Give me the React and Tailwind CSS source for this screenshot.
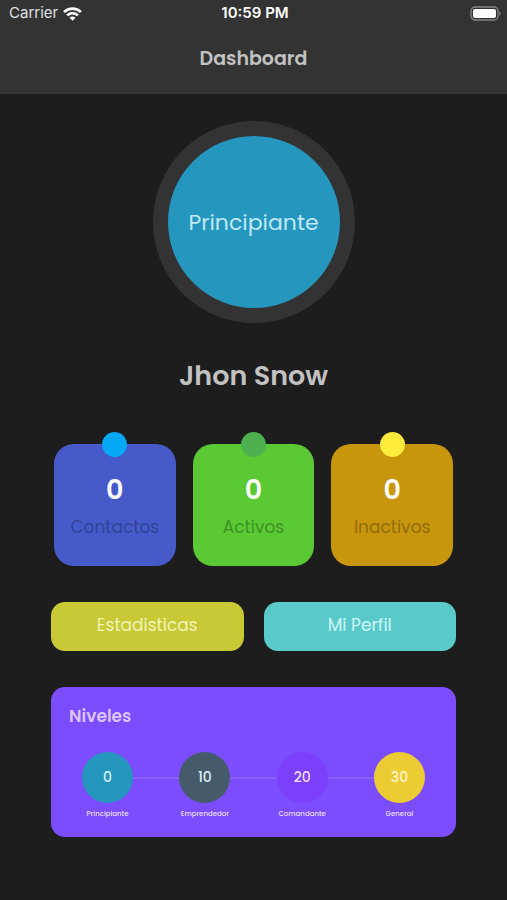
import React from "react";

const stats = [
  {
    label: "Contactos",
    value: 0,
    card: "bg-[#465bc9]",
    dot: "bg-[#03a9f4]",
    text: "text-[#33439a]",
  },
  {
    label: "Activos",
    value: 0,
    card: "bg-[#5ac933]",
    dot: "bg-[#4caf50]",
    text: "text-[#3f9324]",
  },
  {
    label: "Inactivos",
    value: 0,
    card: "bg-[#c8960c]",
    dot: "bg-[#ffeb3b]",
    text: "text-[#926c0a]",
  },
];

const levels = [
  { name: "Principiante", points: 0, color: "bg-[#2596be]", text: "text-[#d5f1fb]" },
  { name: "Emprendedor", points: 10, color: "bg-[#455a6b]", text: "text-[#dbeef5]" },
  { name: "Comandante", points: 20, color: "bg-[#7c3ffb]", text: "text-[#eeddff]" },
  { name: "General", points: 30, color: "bg-[#edcb33]", text: "text-[#fdf6c9]" },
];

const StatusBar = () => {
  return (
    <div className="grid grid-cols-3 items-center h-[27px] pl-[9px] pr-[6px] font-['Inter',sans-serif]">
      <div className="flex items-center gap-[5px] text-[15px] text-[#e0e0e0]">
        Carrier
        <svg width="19" height="14" viewBox="0 0 19 14" fill="none" stroke="#fff" strokeWidth="2.7">
          <path d="M1 5C5.7 0.4 13.3 0.4 18 5" />
          <path d="M4.1 8.4C7.2 5.4 11.8 5.4 14.9 8.4" />
          <path d="M6.5 10.8C8.2 9.2 10.8 9.2 12.5 10.8L9.5 13.8Z" fill="#fff" stroke="none" />
        </svg>
      </div>
      <div className="text-center text-[15px] font-semibold text-white">
        10:59 PM
      </div>
      <svg className="justify-self-end" width="31" height="15" viewBox="0 0 31 15">
        <rect x="1" y="1" width="27" height="13" rx="4" fill="none" stroke="#858585" strokeWidth="1.3" />
        <rect x="3" y="3" width="23" height="9" rx="2" fill="#fff" />
        <path d="M29.3 5.2C31 6 31 9 29.3 9.8Z" fill="#858585" />
      </svg>
    </div>
  );
};

const App = () => {
  return (
    <div className="flex flex-col min-h-screen bg-[#1d1d1e] font-['Poppins','Inter',sans-serif]">
      <header className="bg-[#333333] pb-5">
        <StatusBar />
        <h1 className="pt-[17px] text-center text-[19px] leading-[30px] font-semibold text-[#c2c2c2]">
          Dashboard
        </h1>
      </header>
      <main className="flex flex-col px-[51px] pt-[27px] pb-12">
        <div className="flex items-center justify-center self-center size-[202px] rounded-full border-[15px] border-[#333333] bg-[#2596be] text-[22px] text-[#bfe9f8]">
          Principiante
        </div>
        <h2 className="mt-[33px] text-center text-[27px] leading-[40px] font-semibold text-[#c2c2c2]">
          Jhon Snow
        </h2>

        <div className="grid grid-cols-3 gap-[17px] mt-12 px-[3px]">
          {stats.map((stat) => (
            <div
              key={stat.label}
              className={`relative flex flex-col items-center aspect-square rounded-[20px] pt-[26px] ${stat.card}`}
            >
              <span className={`absolute -top-3 size-[25px] rounded-full ${stat.dot}`} />
              <span className="text-[27px] leading-[40px] font-semibold text-white">
                {stat.value}
              </span>
              <span className={`mt-[3px] text-[17px] leading-[28px] ${stat.text}`}>
                {stat.label}
              </span>
            </div>
          ))}
        </div>

        <div className="grid grid-cols-2 gap-5 mt-9">
          <button className="h-[49px] rounded-[14px] bg-[#c8c935] text-[17px] text-[#f2f3b8]">
            Estadisticas
          </button>
          <button className="h-[49px] rounded-[14px] bg-[#5ac9c9] text-[17px] text-[#cdf7f6]">
            Mi Perfil
          </button>
        </div>

        <section className="mt-9 rounded-[14px] bg-[#7c4dff] px-[18px] pt-[15px] pb-4">
          <h3 className="text-[17px] leading-[28px] font-semibold text-[#dcc5ff]">
            Niveles
          </h3>
          <div className="flex mt-[22px] px-[13px]">
            {levels.map((level, i) => (
              <React.Fragment key={level.name}>
                {i > 0 && <div className="flex-1 h-[2px] mt-[25px] bg-[#8960ff]" />}
                <div className="flex flex-col items-center w-[51px]">
                  <div
                    className={`flex items-center justify-center size-[51px] rounded-full text-[14px] font-medium ${level.color} ${level.text}`}
                  >
                    {level.points}
                  </div>
                  <span className="mt-1 text-[7px] leading-[14px] font-medium whitespace-nowrap text-[#eadfff]">
                    {level.name}
                  </span>
                </div>
              </React.Fragment>
            ))}
          </div>
        </section>
      </main>
    </div>
  );
};

export default App;
